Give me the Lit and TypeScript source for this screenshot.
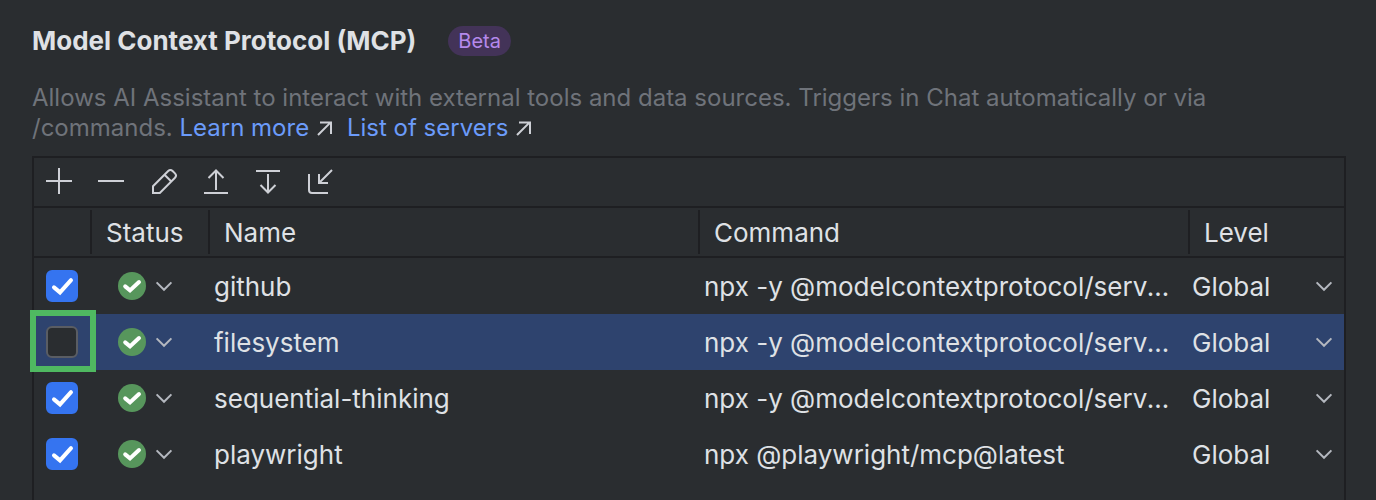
import { LitElement, html, svg, css } from "lit";
import { customElement, state } from "lit/decorators.js";
import { classMap } from "lit/directives/class-map.js";

interface Server {
  name: string;
  command: string;
  enabled: boolean;
}

const toolbarIcons = [
  { label: "Add", shape: svg`<path d="M2 15H28M15 2V28" />` },
  { label: "Remove", shape: svg`<path d="M2 15H28" />` },
  {
    label: "Edit",
    shape: svg`<path d="M5 27V20.2L20.2 5Q22.4 2.8 24.6 5L27 7.4Q29.2 9.6 27 11.8L11.8 27ZM16.5 8.7L23.3 15.5" />`,
  },
  { label: "Move up", shape: svg`<path d="M4 27H28M16 24V4.5M8.5 12L16 4.5L23.5 12" />` },
  { label: "Move down", shape: svg`<path d="M4 5H28M16 8V26.5M8.5 19L16 26.5L23.5 19" />` },
  { label: "Import", shape: svg`<path d="M5 8V24Q5 27 8 27H24M28 4L15 17M15 8V17H24" />` },
];

const chevron = html`<svg class="chevron" width="18" height="18" viewBox="0 0 18 18" aria-hidden="true">
  <path d="M1.6 5.4L9 12.8L16.4 5.4" />
</svg>`;

const externalArrow = html`<svg class="external" width="15" height="15" viewBox="0 0 15 15" aria-hidden="true">
  <path d="M1 14L13.4 1.6M3 1.6H14V13" />
</svg>`;

@customElement("app-root")
class AppRoot extends LitElement {
  @state() private selected = 1;

  @state() private servers: Server[] = [
    { name: "github", command: "npx -y @modelcontextprotocol/server-github", enabled: true },
    { name: "filesystem", command: "npx -y @modelcontextprotocol/server-filesystem", enabled: false },
    { name: "sequential-thinking", command: "npx -y @modelcontextprotocol/server-sequential-thinking", enabled: true },
    { name: "playwright", command: "npx @playwright/mcp@latest", enabled: true },
  ];

  static styles = css`
    :host {
      display: flex;
      flex-direction: column;
      box-sizing: border-box;
      height: 100vh;
      overflow: hidden;
      padding: 25px 30px 0 32px;
      background: #2a2d30;
      color: #dfe1e5;
      font: 26px/32px Inter, sans-serif;
    }
    .heading {
      display: flex;
      align-items: center;
      gap: 32px;
      flex: none;
    }
    h1 {
      margin: 0;
      font-size: 26px;
      font-weight: 700;
    }
    .badge {
      padding: 0 10px;
      border-radius: 15px;
      background: #433358;
      color: #b589ec;
      font-size: 20px;
      line-height: 30px;
    }
    .description {
      flex: none;
      margin: 26px 0 13px;
      color: #6f737a;
      font-size: 24px;
      line-height: 30px;
    }
    .description a {
      color: #6b9bfa;
      text-decoration: none;
      white-space: nowrap;
    }
    .description a + a {
      margin-left: 8px;
    }
    .external {
      margin-left: 8px;
      fill: none;
      stroke: #ced0d6;
      stroke-width: 2;
    }
    .panel {
      flex: 1;
      border: 2px solid #1e1f22;
      border-bottom: 0;
    }
    .toolbar {
      display: flex;
      height: 48px;
      border-bottom: 2px solid #1e1f22;
    }
    button,
    select {
      margin: 0;
      padding: 0;
      border: 0;
      background: none;
      color: inherit;
      font: inherit;
    }
    .tool {
      display: grid;
      place-items: center;
      width: 52px;
    }
    .tool svg {
      fill: none;
      stroke: #ced0d6;
      stroke-width: 2;
    }
    table {
      width: 100%;
      table-layout: fixed;
      border-collapse: separate;
      border-spacing: 0;
    }
    .col-check {
      width: 58px;
    }
    .col-status {
      width: 118px;
    }
    .col-level {
      width: 154px;
    }
    th {
      box-sizing: border-box;
      height: 50px;
      padding: 2px 0;
      border-bottom: 2px solid #1e1f22;
      font-weight: 400;
      text-align: left;
    }
    .head {
      display: block;
      height: 44px;
      padding-left: 14px;
      border-right: 2px solid #1e1f22;
      line-height: 46px;
    }
    th:last-child .head {
      border-right: 0;
    }
    td {
      position: relative;
      box-sizing: border-box;
      height: 56px;
      padding: 2px 4px 0;
      overflow: hidden;
      text-overflow: ellipsis;
      white-space: nowrap;
      line-height: 54px;
    }
    .check-cell {
      overflow: visible;
      padding: 0 12px;
    }
    .command {
      padding-right: 20px;
    }
    .level {
      padding: 0 11px 0 2px;
    }
    .selected td {
      background: #2e436e;
    }
    .check {
      display: grid;
      width: 32px;
      height: 32px;
    }
    .check > * {
      grid-area: 1 / 1;
    }
    .check input {
      appearance: none;
      box-sizing: border-box;
      width: 32px;
      height: 32px;
      margin: 0;
      border: 2px solid #5a5d63;
      border-radius: 6px;
      background: #2a2d30;
    }
    .check input:checked {
      border-color: #3574f0;
      background: #3574f0;
    }
    .check svg {
      visibility: hidden;
      pointer-events: none;
      fill: none;
      stroke: #fff;
      stroke-width: 4;
      stroke-linecap: round;
      stroke-linejoin: miter;
    }
    .check input:checked + svg {
      visibility: visible;
    }
    .highlight {
      position: absolute;
      z-index: 1;
      inset: -4px -4px -2px;
      border: 6px solid #4fb961;
      pointer-events: none;
    }
    .status-cell {
      padding: 0 26px;
    }
    .status {
      display: flex;
      align-items: center;
      gap: 9px;
      height: 56px;
    }
    .ok circle {
      fill: #57965c;
    }
    .ok path {
      fill: none;
      stroke: #fff;
      stroke-width: 4;
      stroke-linecap: round;
      stroke-linejoin: miter;
    }
    .chevron {
      fill: none;
      stroke: #b4b8bf;
      stroke-width: 2;
    }
    .level-picker {
      display: grid;
      align-items: center;
    }
    .level-picker > * {
      grid-area: 1 / 1;
    }
    .level-picker select {
      appearance: none;
      box-sizing: border-box;
      height: 56px;
      padding-top: 2px;
      outline: none;
    }
    .level-picker .chevron {
      justify-self: end;
      pointer-events: none;
    }
  `;

  private toggle(index: number, enabled: boolean) {
    this.servers = this.servers.map((s, i) => (i === index ? { ...s, enabled } : s));
  }

  private renderRow(server: Server, index: number) {
    const selected = index === this.selected;
    return html`<tr class=${classMap({ selected })} @click=${() => (this.selected = index)}>
      <td class="check-cell">
        <label class="check">
          <input
            type="checkbox"
            aria-label="Enable ${server.name}"
            .checked=${server.enabled}
            @change=${(e: Event) => this.toggle(index, (e.target as HTMLInputElement).checked)}
          />
          <svg width="32" height="32" viewBox="0 0 32 32" aria-hidden="true"><path d="M8 17.4L14 22.4L25 10.2" /></svg>
        </label>
        ${selected ? html`<span class="highlight"></span>` : ""}
      </td>
      <td class="status-cell">
        <button class="status" aria-label="Status of ${server.name}: connected">
          <svg class="ok" width="28" height="28" viewBox="0 0 28 28" aria-hidden="true">
            <circle cx="14" cy="14" r="14" />
            <path d="M7.2 14.4L12 18.4L21 10" />
          </svg>
          ${chevron}
        </button>
      </td>
      <td>${server.name}</td>
      <td class="command">${server.command}</td>
      <td class="level">
        <div class="level-picker">
          <select aria-label="Level of ${server.name}">
            <option>Global</option>
            <option>Project</option>
          </select>
          ${chevron}
        </div>
      </td>
    </tr>`;
  }

  render() {
    return html`
      <header class="heading">
        <h1>Model Context Protocol (MCP)</h1>
        <span class="badge">Beta</span>
      </header>
      <p class="description">
        Allows AI Assistant to interact with external tools and data sources. Triggers in Chat automatically or via
        /commands. <a href="#learn-more">Learn more${externalArrow}</a>
        <a href="#servers">List of servers${externalArrow}</a>
      </p>
      <section class="panel">
        <div class="toolbar">
          ${toolbarIcons.map(
            (icon) => html`<button class="tool" aria-label=${icon.label}>
              <svg width="32" height="32" viewBox="0 0 32 32" aria-hidden="true">${icon.shape}</svg>
            </button>`,
          )}
        </div>
        <table>
          <colgroup>
            <col class="col-check" />
            <col class="col-status" />
            <col />
            <col />
            <col class="col-level" />
          </colgroup>
          <thead>
            <tr>
              ${["", "Status", "Name", "Command", "Level"].map(
                (title) => html`<th scope="col"><span class="head">${title}</span></th>`,
              )}
            </tr>
          </thead>
          <tbody>
            ${this.servers.map((server, index) => this.renderRow(server, index))}
          </tbody>
        </table>
      </section>
    `;
  }
}
